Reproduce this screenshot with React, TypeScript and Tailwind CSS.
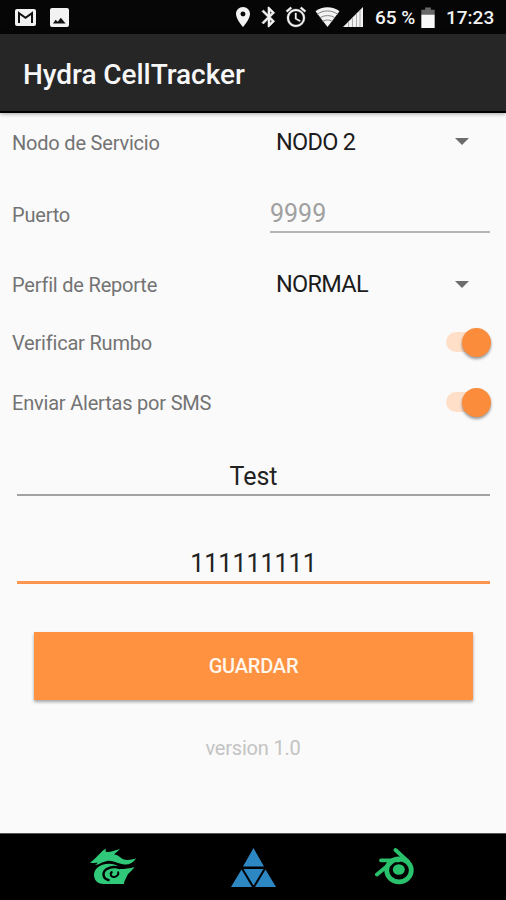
import type { ReactNode } from "react";

function StatusBar() {
  return (
    <div className="flex h-[34px] shrink-0 items-center bg-[#060606] pl-[15px] pr-[11px] text-[19px] font-medium text-[#f2f2f2]">
      <svg className="h-[17px] w-[21px]" viewBox="0 0 21 17">
        <rect width="21" height="17" rx="2" fill="#f2f2f2" />
        <path d="M4 14V4.2l6.5 4.6L17 4.2V14" fill="none" stroke="#111" strokeWidth="2" />
      </svg>
      <svg className="ml-[14px] h-[19px] w-[19px]" viewBox="0 0 19 19">
        <rect width="19" height="19" rx="2" fill="#f2f2f2" />
        <path d="M3 15.5l2.6-3.7 2.2 2 3-4 4.8 5.7z" fill="#111" />
      </svg>

      <div className="ml-auto flex items-center">
        <svg className="h-6 w-6" viewBox="0 0 24 24" fill="#f2f2f2">
          <path d="M12 2C8.13 2 5 5.13 5 9c0 5.25 7 13 7 13s7-7.75 7-13c0-3.87-3.13-7-7-7zm0 9.5a2.5 2.5 0 0 1 0-5 2.5 2.5 0 0 1 0 5z" />
        </svg>
        <svg className="ml-[2px] h-6 w-6" viewBox="0 0 24 24" fill="#f2f2f2" stroke="#f2f2f2" strokeWidth="0.6">
          <path d="M17.71 7.71L12 2h-1v7.59L6.41 5 5 6.41 10.59 12 5 17.59 6.41 19 11 14.41V22h1l5.71-5.71-4.3-4.29 4.3-4.29zM13 5.83l1.88 1.88L13 9.59V5.83zm1.88 10.46L13 18.17v-3.76l1.88 1.88z" />
        </svg>
        <svg className="ml-[3px] h-6 w-6" viewBox="0 0 24 24" fill="#f2f2f2" stroke="#f2f2f2" strokeWidth="0.3">
          <path d="M22 5.72l-4.6-3.86-1.29 1.53 4.6 3.86L22 5.72zM7.88 3.39L6.6 1.86 2 5.71l1.29 1.53 4.59-3.85zM12.5 8H11v6l4.75 2.85.75-1.23-4-2.37V8zM12 4c-4.97 0-9 4.03-9 9s4.02 9 9 9a9 9 0 0 0 0-18zm0 16c-3.87 0-7-3.13-7-7s3.13-7 7-7 7 3.13 7 7-3.13 7-7 7z" />
        </svg>
        <svg className="ml-[7px] h-[20px] w-[25px]" viewBox="0 0 25 20">
          <path d="M0.5 4.2C7-1 18-1 24.5 4.2L12.5 20z" fill="#f2f2f2" />
          <path d="M2 7.4c6-4.6 15-4.6 21 0M4.8 11c4.5-3.2 11-3.2 15.4 0M7.6 14.5c3-2 6.8-2 9.8 0" fill="none" stroke="#808080" strokeWidth="1" />
        </svg>
        <svg className="ml-[3px] h-[20px] w-[20px]" viewBox="0 0 20 20">
          <path d="M0 20L20 0v20z" fill="#f2f2f2" />
          <path d="M5.5 14v6M9.5 10v10M13.5 6v14M17 3v17" stroke="#999" strokeWidth="0.8" />
        </svg>
        <span className="ml-[12px] w-[46px] whitespace-nowrap pt-[1px]">65 %</span>
        <svg className="h-[21px] w-[14px]" viewBox="0 0 14 22">
          <path d="M4 0.5h6V3h4v5H0V3h4z" fill="#686868" />
          <path d="M0 8h14v14H0z" fill="#f8f8f8" />
        </svg>
        <span className="ml-[11px] w-[49px] whitespace-nowrap pt-[1px]">17:23</span>
      </div>
    </div>
  );
}

function Row({ label, className, children }: { label: string; className: string; children: ReactNode }) {
  return (
    <div className={`flex items-center justify-between pl-3 pr-4 ${className}`}>
      <span className="text-[20px] tracking-[-0.2px] text-[#737373]">{label}</span>
      {children}
    </div>
  );
}

function Spinner({ value }: { value: string }) {
  return (
    <div className="flex w-[214px] items-center justify-between pr-[21px] text-[23.5px] tracking-[-0.7px] text-[#1c1c1c]">
      <span>{value}</span>
      <svg className="mb-[2px] h-[7px] w-[14px]" viewBox="0 0 14 7">
        <path d="M0 0h14L7 7z" fill="#6c6c6c" />
      </svg>
    </div>
  );
}

function Toggle() {
  return (
    <div className="-mr-px mb-[2px] flex h-5 w-[45px] items-center justify-end rounded-full bg-[#ffdfc8]">
      <div className="h-[29px] w-[29px] shrink-0 rounded-full bg-[#fb8c3c] shadow-[0_2px_3px_rgba(0,0,0,0.4)]" />
    </div>
  );
}

function NavBar() {
  return (
    <nav className="flex h-[67px] shrink-0 items-center border-t border-[#555] bg-black pl-[90px]">
      <svg className="h-[38px] w-[46px]" viewBox="0 0 46 38">
        <path
          d="M0 14.5C4 12.5 7 8 11 4.5 12.5 3 14 1.5 16 .8L15.5 3.8C20 4.5 24 2.5 30 1L24 6.5C29 7 30.5 10 34 11.5 37.5 12.5 42 11.5 46 10.5 43 15 39 17 34 16.5 27 15.8 23 12 17 13 12 13.8 9 17 5 17L8 14.8C5 14.2 2.5 15.5 0 14.5z"
          fill="#30c979"
        />
        {/* body of the G, open at the top right where the tail starts */}
        <path
          d="M28.5 18.5C25 15.5 18 14.8 12.5 16.8 6.5 19 3.8 23 4 27.5 4.3 32.5 8 36 14 36H34C33.8 33.5 35.5 31.5 37 28 38.5 24.5 42 23 44.5 19 40 20.5 35 21 28.5 21z"
          fill="#30c979"
        />
        <path
          d="M30 20C22 17.500 13.500 20.500 13.500 26.300 13.500 29.500 16 31.800 19.500 32.200"
          fill="none"
          stroke="#000"
          strokeWidth="2.4"
        />
        <path d="M22.500 23.800C19.500 25 20.500 29.500 24.500 29 27.500 28.500 29 26 28 23.500" fill="none" stroke="#000" strokeWidth="2" />
      </svg>
      <svg className="ml-[95px] h-[39px] w-[45px]" viewBox="0 0 45 39" fill="#2d87c3">
        <path d="M22.5 0L33 18.5H12zM12.5 21h20L22.5 37.5zM10.5 21.5L21 39H0zM34.5 21.5L45 39H24z" />
      </svg>
      <svg className="ml-[99px] h-[38px] w-[40px]" viewBox="0 0 40 38" fill="none" stroke="#2ac16c">
        <ellipse cx="24" cy="22.3" rx="12.3" ry="11.5" strokeWidth="4.8" />
        <path d="M20.5 2L33 13.5M6 12.3H24M2 26.5L17 14" strokeWidth="3.8" strokeLinecap="round" />
        <ellipse cx="23.8" cy="21.5" rx="6" ry="5.3" fill="#2ac16c" stroke="none" />
      </svg>
    </nav>
  );
}

export default function App() {
  return (
    <div className="flex h-[900px] w-[506px] flex-col overflow-hidden bg-[#fafafa] font-['Roboto',sans-serif] leading-none">
      <StatusBar />
      <header className="flex h-[79px] shrink-0 items-center border-b-2 border-black bg-[#262626] pl-[23px] pt-[5px] text-[28px] font-medium tracking-[-0.05px] text-[#f7f7f7] shadow-[0_1px_4px_rgba(0,0,0,0.35)]">
        Hydra CellTracker
      </header>

      <main className="flex flex-1 flex-col">
        <Row label="Nodo de Servicio" className="h-[59px]">
          <Spinner value="NODO 2" />
        </Row>
        <Row label="Puerto" className="h-[85px]">
          <div className="mb-[3px] flex h-[40px] w-[220px] items-center border-b-2 border-[#b5b5b5] pt-[3px] text-[25px] text-[#a0a0a0]">
            9999
          </div>
        </Row>
        <Row label="Perfil de Reporte" className="h-[56px]">
          <Spinner value="NORMAL" />
        </Row>
        <Row label="Verificar Rumbo" className="h-[60px]">
          <Toggle />
        </Row>
        <Row label="Enviar Alertas por SMS" className="h-[60px]">
          <Toggle />
        </Row>

        <div className="ml-[17px] mr-4 mt-[23px] flex h-[40px] items-center justify-center border-b-2 border-[#a2a2a2] pt-[3px] text-[25px] text-[#222]">
          Test
        </div>
        <div className="ml-[17px] mr-4 mt-[44px] flex h-[44px] items-center justify-center border-b-3 border-[#ff9650] pt-[5px] text-[25px] text-[#222]">
          111111111
        </div>

        <button className="ml-[34px] mt-[48px] h-[68px] w-[439px] shrink-0 bg-[#ff9240] text-[20px] font-medium tracking-[-0.2px] text-[#fff6ec] shadow-[0_2px_3px_rgba(0,0,0,0.35)]">
          GUARDAR
        </button>
        <p className="mt-[38px] text-center text-[20px] tracking-[-0.2px] text-[#c3c3c3]">version 1.0</p>
      </main>

      <NavBar />
    </div>
  );
}
